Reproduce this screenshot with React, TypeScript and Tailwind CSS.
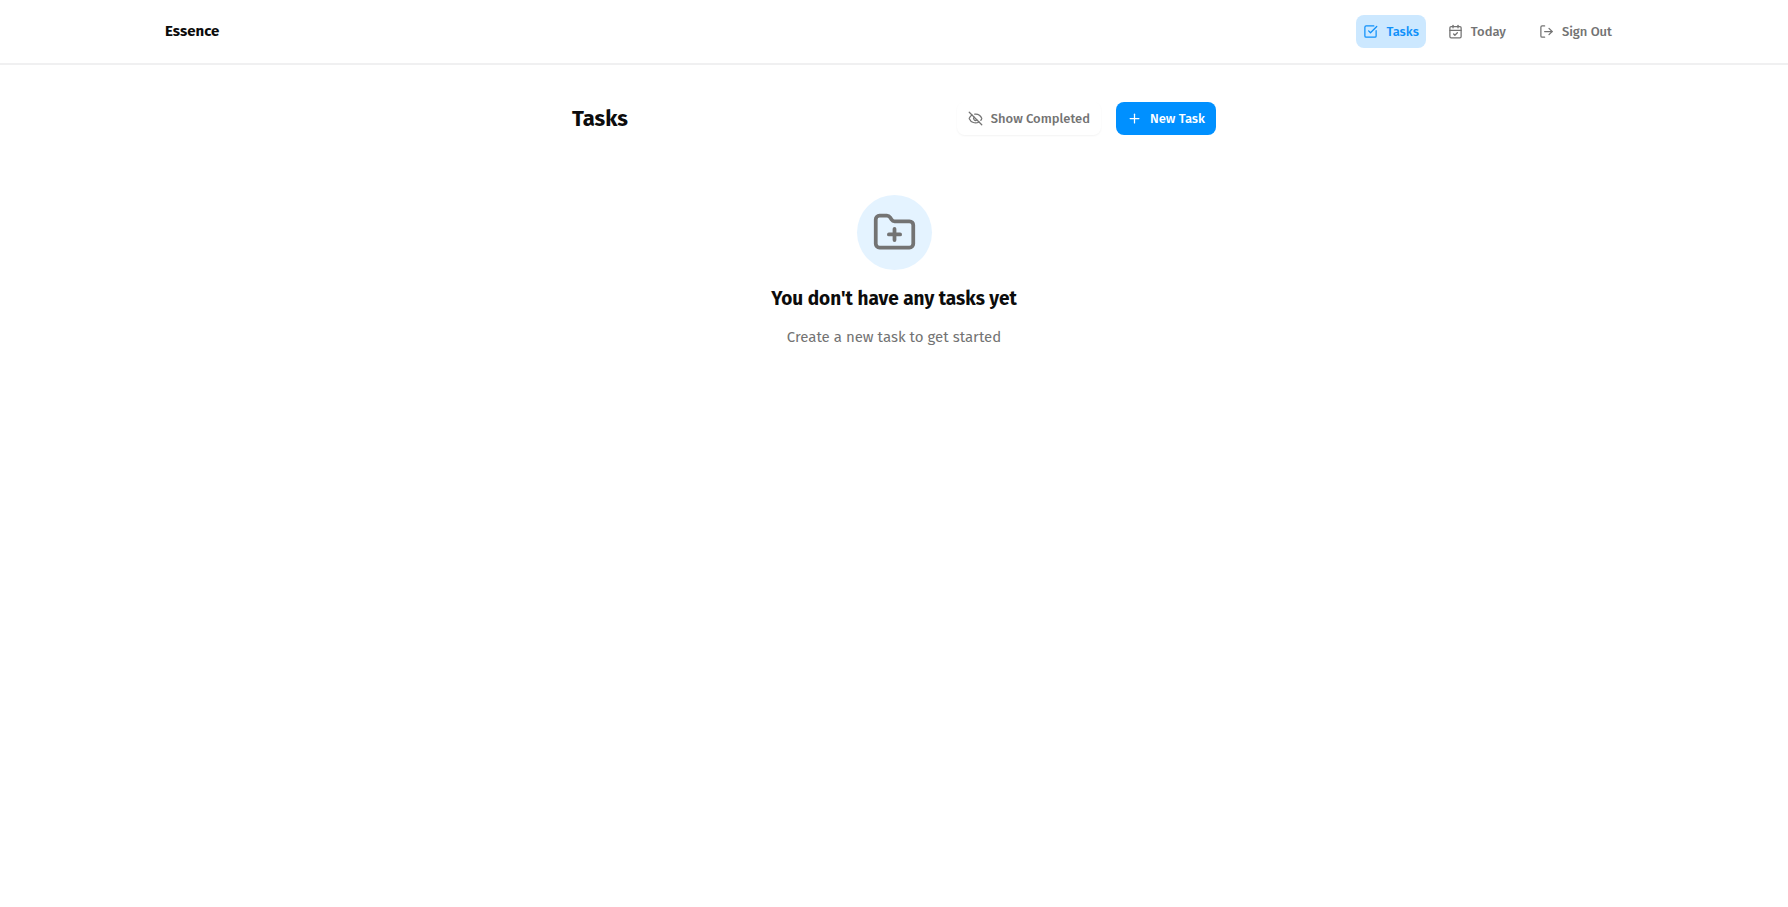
import { CalendarCheck, EyeOff, FolderPlus, LogOut, Plus, SquareCheckBig } from "lucide-react";

const navItem = "flex h-[33px] items-center gap-2 rounded-lg text-[13px] leading-5 font-medium";
const action = "flex h-[33px] items-center gap-2 rounded-lg px-[11px] text-[13px] leading-5 font-medium";

export default function App() {
  return (
    <div className="min-h-screen bg-white font-['Fira_Sans','Noto_Sans_CJK_SC',sans-serif] text-[#0c0c0c]">
      <header className="border-b-2 border-[#f0f0f1]">
        <div className="mx-auto flex h-[63px] max-w-[1458px] items-center justify-between">
          <a href="#" className="text-[15px] font-bold">Essence</a>
          <nav className="flex items-center gap-[15px]">
            <a href="#tasks" aria-current="page" className={`${navItem} bg-[#cce8ff] px-[7px] text-[#0f90fa]`}>
              <SquareCheckBig size={15} />
              Tasks
            </a>
            <a href="#today" className={`${navItem} px-[7px] text-[#737373]`}>
              <CalendarCheck size={15} />
              Today
            </a>
            <button type="button" className={`${navItem} px-[11px] text-[#737373]`}>
              <LogOut size={15} />
              Sign Out
            </button>
          </nav>
        </div>
      </header>
      <main className="mx-auto max-w-[644px] pt-[37px]">
        <div className="flex items-center justify-between">
          <h1 className="text-[22px] leading-8 font-bold">Tasks</h1>
          <div className="flex gap-[15px]">
            <button type="button" className={`${action} text-[#737373] shadow-[0_1px_2px_rgba(0,0,0,0.05)]`}>
              <EyeOff size={15} />
              Show Completed
            </button>
            <button type="button" className={`${action} bg-[#0090ff] text-white`}>
              <Plus size={15} />
              New Task
            </button>
          </div>
        </div>
        <section className="flex flex-col items-center pt-[60px]">
          <div className="flex size-[75px] items-center justify-center rounded-full bg-[#e4f3ff] text-[#737373]">
            <FolderPlus size={45} />
          </div>
          <h2 className="mt-[15px] text-[19px] leading-[28px] font-bold">You don't have any tasks yet</h2>
          <p className="mt-[13px] text-[15px] leading-[22px] text-[#737373]">Create a new task to get started</p>
        </section>
      </main>
    </div>
  );
}
